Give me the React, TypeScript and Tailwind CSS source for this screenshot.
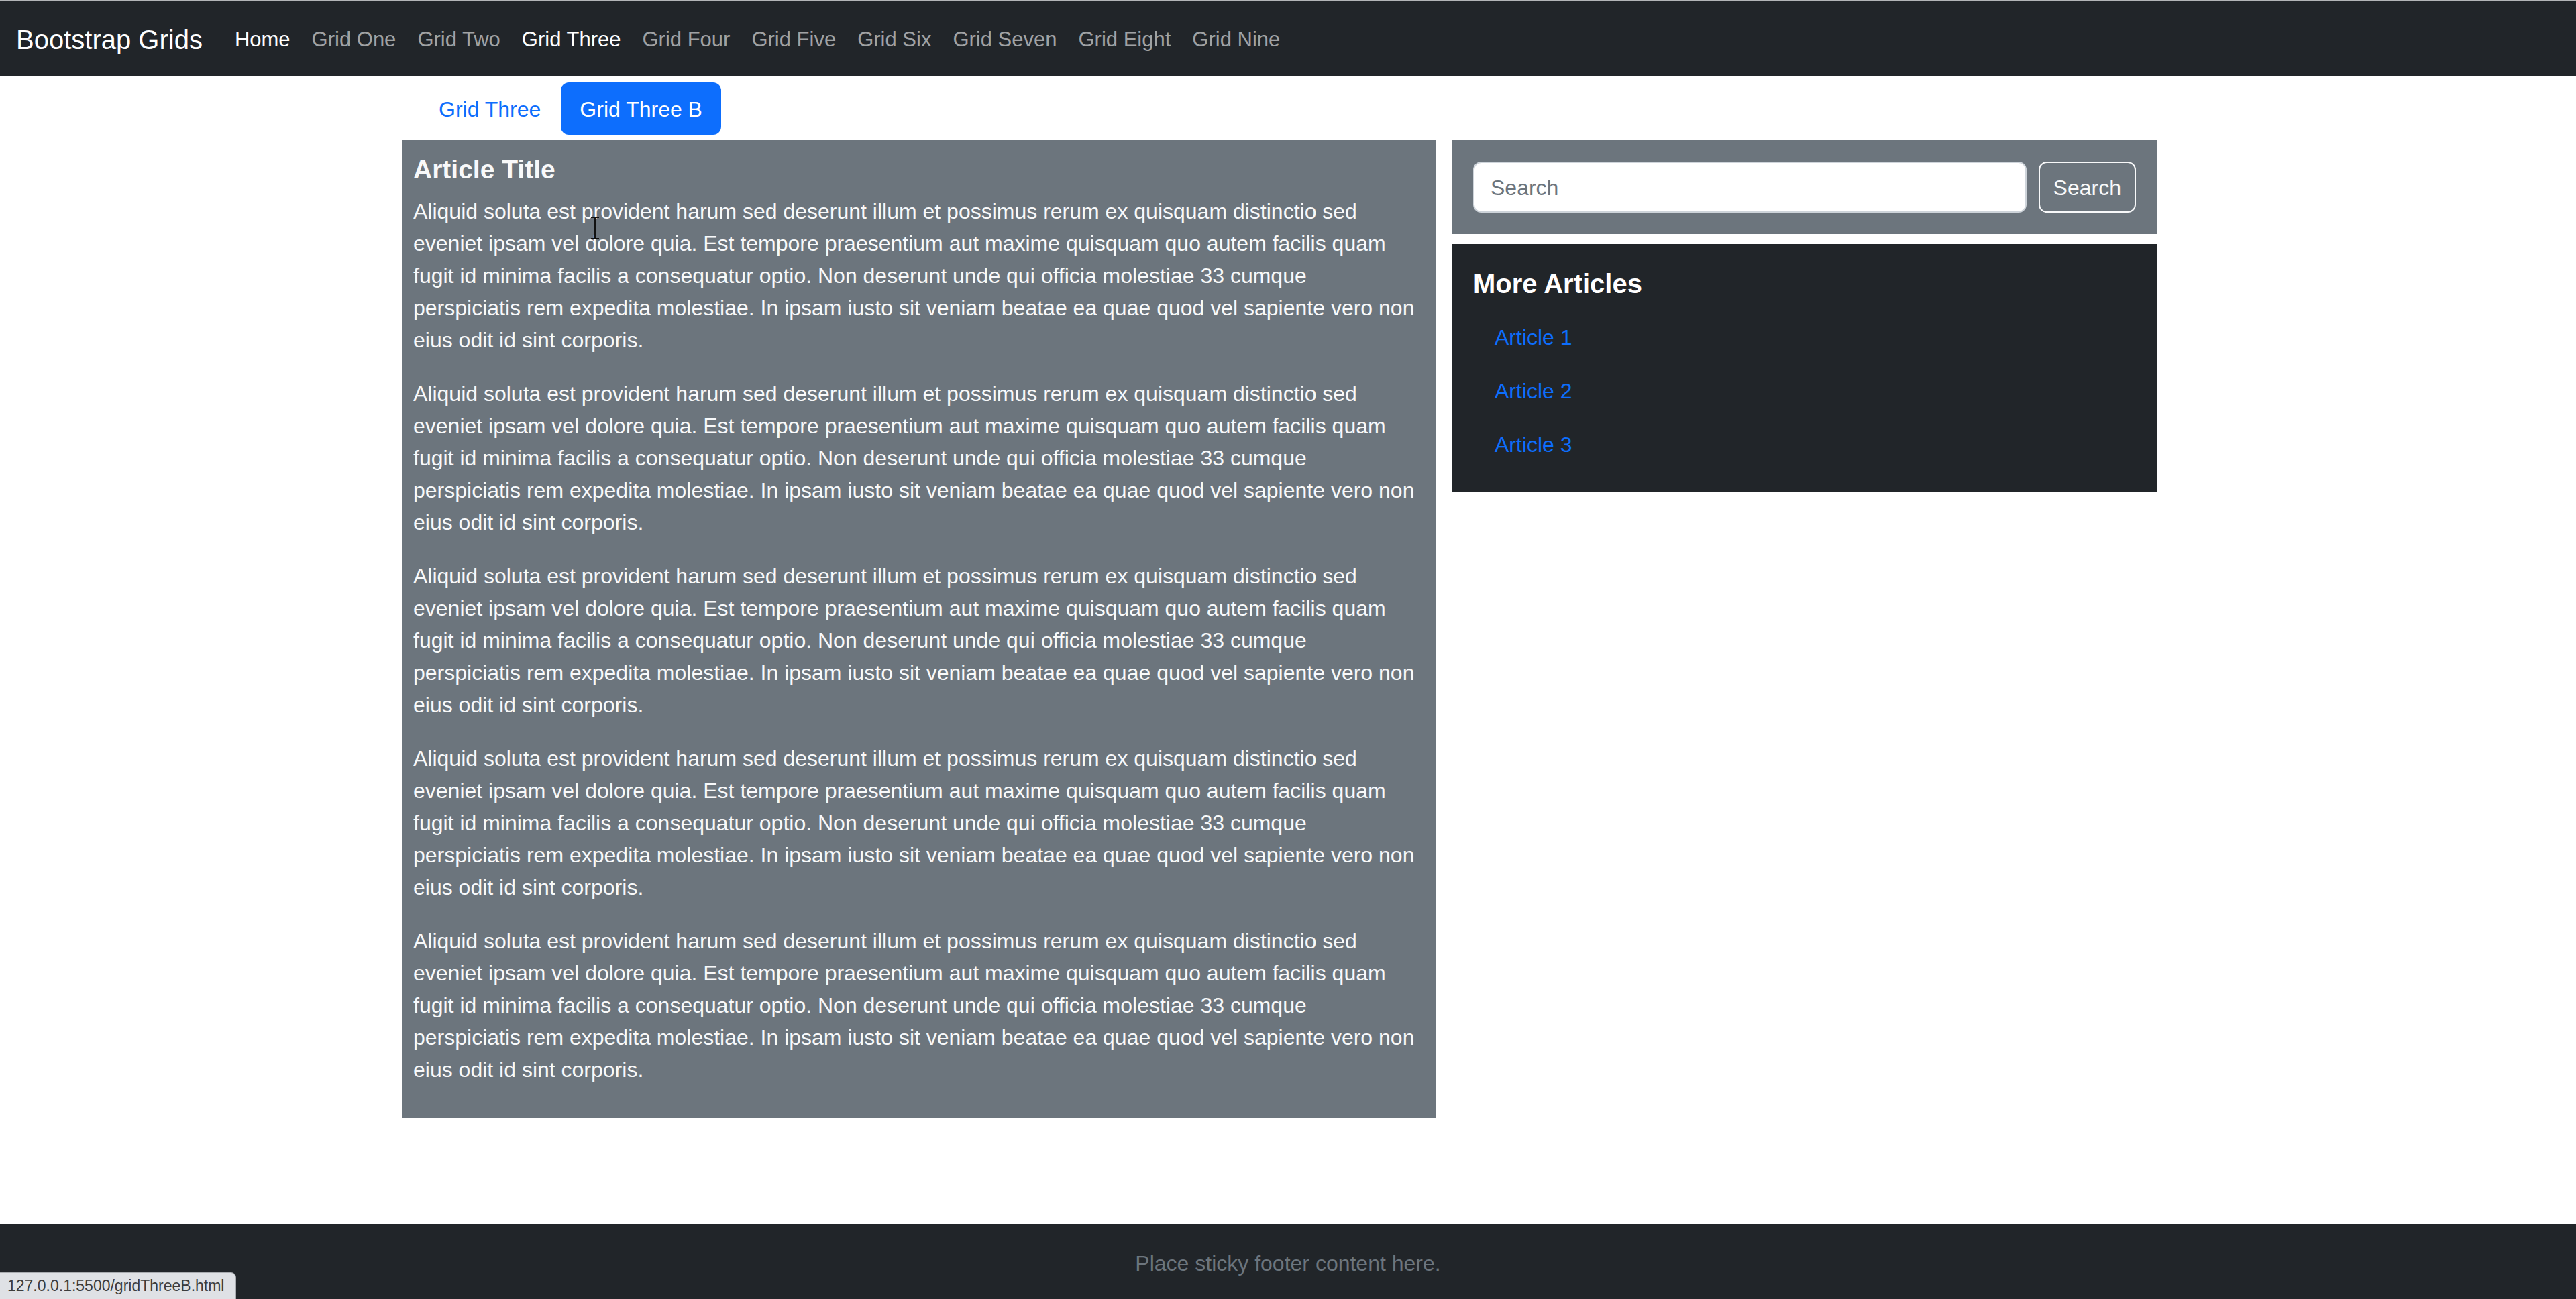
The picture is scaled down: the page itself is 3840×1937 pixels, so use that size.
const navLinks = [
  { label: "Home", active: true },
  { label: "Grid One" },
  { label: "Grid Two" },
  { label: "Grid Three", active: true },
  { label: "Grid Four" },
  { label: "Grid Five" },
  { label: "Grid Six" },
  { label: "Grid Seven" },
  { label: "Grid Eight" },
  { label: "Grid Nine" },
];

// lines broken where the original page breaks them
const loremLines = [
  "Aliquid soluta est provident harum sed deserunt illum et possimus rerum ex quisquam distinctio sed",
  "eveniet ipsam vel dolore quia. Est tempore praesentium aut maxime quisquam quo autem facilis quam",
  "fugit id minima facilis a consequatur optio. Non deserunt unde qui officia molestiae 33 cumque",
  "perspiciatis rem expedita molestiae. In ipsam iusto sit veniam beatae ea quae quod vel sapiente vero non",
  "eius odit id sint corporis.",
];

export default function App() {
  return (
    <div className="relative min-h-screen flex flex-col bg-white font-['Liberation_Sans',Arial,sans-serif]">
      {/* navbar */}
      <nav className="h-[113px] shrink-0 bg-[#212529] border-t-2 border-[#b3b5b7] flex items-center px-[24px] pt-[2px]">
        <a className="text-[40px] leading-[60px] text-white mr-[32px] whitespace-nowrap">
          Bootstrap Grids
        </a>
        <ul className="flex">
          {navLinks.map((l) => (
            <li key={l.label}>
              <a
                className={`block px-[16px] text-[31px] leading-[48px] whitespace-nowrap ${
                  l.active ? "text-white" : "text-[#a0a2a4]"
                }`}
              >
                {l.label}
              </a>
            </li>
          ))}
        </ul>
      </nav>

      <main className="flex-1">
        <div className="w-[2640px] mx-auto px-[24px]">
          <ul className="flex mt-[10px] mb-[8px]">
            <li>
              <a className="flex items-center h-[78px] px-[30px] pt-[2px] text-[32px] text-[#0d6efd]">
                Grid Three
              </a>
            </li>
            <li>
              <a className="flex items-center h-[78px] px-[28px] pt-[2px] text-[32px] text-white bg-[#0d6efd] rounded-[12px]">
                Grid Three B
              </a>
            </li>
          </ul>

          <div className="flex items-start gap-[23px] -ml-[24px]">
            <article className="relative w-[1541px] shrink-0 bg-[#6c757d] px-[16px] pt-[20px] pb-[16px] text-[#f8f9fa]">
              <h5 className="text-[39px] leading-[48px] font-bold mb-[14px]">Article Title</h5>
              {[0, 1, 2, 3, 4].map((i) => (
                <p key={i} className="text-[32px] leading-[48px] mb-[32px] whitespace-nowrap">
                  {loremLines.map((line, j) => (
                    <span key={j}>
                      {line}
                      {j < loremLines.length - 1 && <br />}
                    </span>
                  ))}
                </p>
              ))}
              {/* mouse cursor */}
              <svg
                className="absolute left-[280px] top-[114px]"
                width="14"
                height="34"
                viewBox="0 0 14 34"
              >
                <path d="M1 1h5l1 2 1-2h5M7 3v28M1 33h5l1-2 1 2h5" stroke="#111" strokeWidth="2" fill="none" />
              </svg>
            </article>

            <aside className="w-[1052px] shrink-0 flex flex-col gap-[15px]">
              <div className="bg-[#6c757d] p-[32px] flex gap-[18px]">
                <input
                  type="text"
                  placeholder="Search"
                  className="flex-1 h-[76px] bg-white border-2 border-[#ced4da] rounded-[12px] px-[24px] pt-[2px] text-[32px] text-[#212529] placeholder:text-[#6c757d] outline-none"
                />
                <button className="h-[76px] px-[20px] pt-[2px] border-2 border-[#f8f9fa] rounded-[12px] text-[32px] text-[#f8f9fa]">
                  Search
                </button>
              </div>

              <div className="bg-[#212529] px-[32px] pt-[35px] pb-[30px]">
                <h5 className="text-[40px] leading-[48px] font-bold text-white mb-[16px]">
                  More Articles
                </h5>
                <ul className="flex flex-col">
                  {["Article 1", "Article 2", "Article 3"].map((a) => (
                    <li key={a}>
                      <a className="block px-[32px] py-[16px] text-[32px] leading-[48px] text-[#0d6efd]">
                        {a}
                      </a>
                    </li>
                  ))}
                </ul>
              </div>
            </aside>
          </div>
        </div>
      </main>

      <footer className="h-[112px] shrink-0 bg-[#212529] flex items-center justify-center pt-[6px]">
        <span className="text-[32px] text-[#6c757d]">Place sticky footer content here.</span>
      </footer>

      {/* browser status bubble */}
      <div className="absolute left-0 bottom-0 h-[40px] w-[352px] bg-[#dfe1e5] border-t border-r border-[#a9acb0] rounded-tr-[8px] flex items-center pl-[11px]">
        <span className="text-[23px] leading-none text-[#3c3c3c] whitespace-nowrap">
          127.0.0.1:5500/gridThreeB.html
        </span>
      </div>
    </div>
  );
}
